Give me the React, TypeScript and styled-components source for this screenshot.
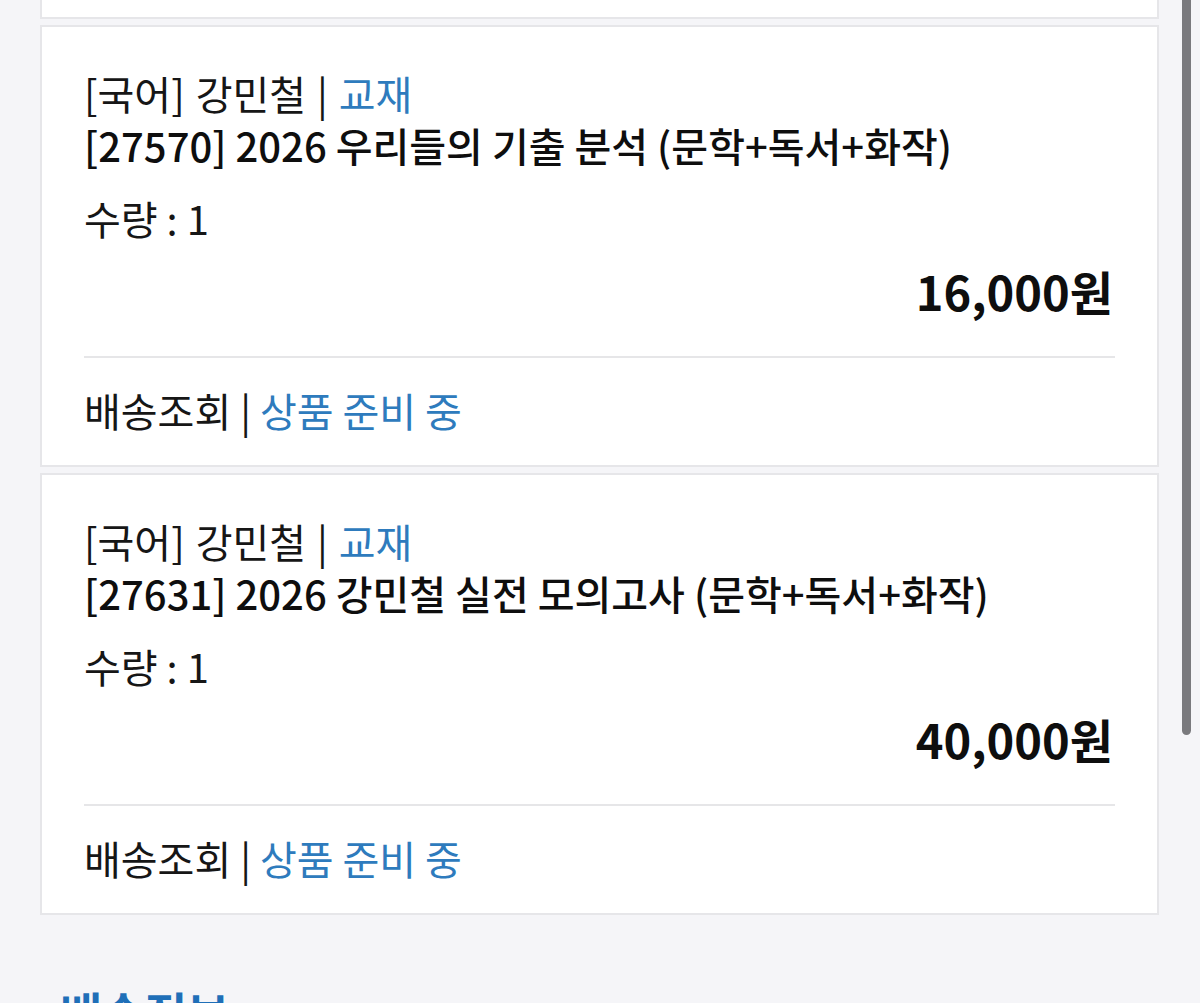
import styled, { createGlobalStyle } from 'styled-components';

type OrderItem = {
  subject: string;
  teacher: string;
  kind: string;
  code: string;
  title: string;
  quantity: number;
  price: number;
  status: string;
};

const ITEMS: OrderItem[] = [
  {
    subject: '국어',
    teacher: '강민철',
    kind: '교재',
    code: '27570',
    title: '2026 우리들의 기출 분석 (문학+독서+화작)',
    quantity: 1,
    price: 16000,
    status: '상품 준비 중',
  },
  {
    subject: '국어',
    teacher: '강민철',
    kind: '교재',
    code: '27631',
    title: '2026 강민철 실전 모의고사 (문학+독서+화작)',
    quantity: 1,
    price: 40000,
    status: '상품 준비 중',
  },
];

const GlobalStyle = createGlobalStyle`
  html, body {
    margin: 0;
    padding: 0;
    background: #f5f5f8;
    overflow: hidden;
  }
  body {
    font-family: 'Noto Sans CJK KR', 'Noto Sans', sans-serif;
    color: #141414;
  }
`;

const formatPrice = (n: number) => n.toLocaleString('en-US');

const App = () => {
  return (
    <Page>
      <GlobalStyle />
      <List>
        {/* bottom of the previous item, scrolled past the top */}
        <CardTail />
        {ITEMS.map((item) => (
          <Card key={item.code}>
            <Category>
              [{item.subject}] {item.teacher} | <Blue>{item.kind}</Blue>
            </Category>
            <Title>
              [{item.code}] {item.title}
            </Title>
            <Quantity>수량 : {item.quantity}</Quantity>
            <Price>{formatPrice(item.price)}원</Price>
            <Divider />
            <Status>
              배송조회 | <Blue>{item.status}</Blue>
            </Status>
          </Card>
        ))}
      </List>
      <SectionTitle>배송정보</SectionTitle>
      <ScrollThumb />
    </Page>
  );
};

const Page = styled.div`
  position: relative;
  width: 1200px;
  height: 1003px;
  overflow: hidden;
  background: #f5f5f8;
`;

const List = styled.div`
  display: flex;
  flex-direction: column;
  gap: 6px;
  margin: 0 41px 0 40px;
`;

const CardTail = styled.div`
  height: 17px;
  background: #ffffff;
  border: 2px solid #e6e6e9;
  border-top: none;
`;

const Card = styled.div`
  display: flex;
  flex-direction: column;
  background: #ffffff;
  border: 2px solid #e6e6e9;
  padding: 40px 42px 29px 42px;
`;

const Line = styled.div`
  font-size: 40px;
  line-height: 52px;
  height: 52px;
  font-weight: 400;
  color: #161616;
  white-space: nowrap;
`;

const Category = styled(Line)`
  word-spacing: 2px;
`;

const Title = styled(Line)`
  font-weight: 500;
  color: #0e0e0e;
`;

const Quantity = styled(Line)`
  margin-top: 21px;
`;

const Status = styled(Line)`
  margin-top: 26px;
`;

const Price = styled.div`
  margin-top: 21px;
  text-align: right;
  font-size: 47px;
  line-height: 52px;
  font-weight: 600;
  color: #0e0e0e;
  padding-right: 2px;
`;

const Divider = styled.div`
  margin-top: 39px;
  height: 2px;
  background: #e6e6e8;
`;

const Blue = styled.span`
  display: inline-block;
  line-height: 52px;
  color: #2e7bbd;
`;

const SectionTitle = styled.h2`
  margin: 70px 0 0 60px;
  font-size: 46px;
  line-height: 52px;
  font-weight: 700;
  color: #1f6fb8;
`;

const ScrollThumb = styled.div`
  position: absolute;
  top: -6px;
  right: 9px;
  width: 9px;
  height: 741px;
  border-radius: 5px;
  background: #7a7a7e;
`;

export default App;
